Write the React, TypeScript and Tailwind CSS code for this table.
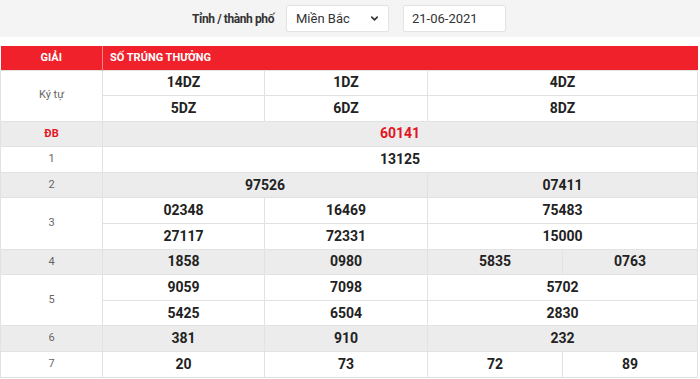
// Kết quả xổ số — bảng kết quả Miền Bắc
import { ChevronDown } from "lucide-react";

type Cell = { text: string; span: number };
interface Row {
  label: string;
  lines: Cell[][];
  gray?: boolean;
  special?: boolean;
}

const rows: Row[] = [
  {
    label: "Ký tự",
    lines: [
      [{ text: "14DZ", span: 1 }, { text: "1DZ", span: 1 }, { text: "4DZ", span: 2 }],
      [{ text: "5DZ", span: 1 }, { text: "6DZ", span: 1 }, { text: "8DZ", span: 2 }],
    ],
  },
  { label: "ĐB", gray: true, special: true, lines: [[{ text: "60141", span: 4 }]] },
  { label: "1", lines: [[{ text: "13125", span: 4 }]] },
  { label: "2", gray: true, lines: [[{ text: "97526", span: 2 }, { text: "07411", span: 2 }]] },
  {
    label: "3",
    lines: [
      [{ text: "02348", span: 1 }, { text: "16469", span: 1 }, { text: "75483", span: 2 }],
      [{ text: "27117", span: 1 }, { text: "72331", span: 1 }, { text: "15000", span: 2 }],
    ],
  },
  {
    label: "4",
    gray: true,
    lines: [[{ text: "1858", span: 1 }, { text: "0980", span: 1 }, { text: "5835", span: 1 }, { text: "0763", span: 1 }]],
  },
  {
    label: "5",
    lines: [
      [{ text: "9059", span: 1 }, { text: "7098", span: 1 }, { text: "5702", span: 2 }],
      [{ text: "5425", span: 1 }, { text: "6504", span: 1 }, { text: "2830", span: 2 }],
    ],
  },
  { label: "6", gray: true, lines: [[{ text: "381", span: 1 }, { text: "910", span: 1 }, { text: "232", span: 2 }]] },
  {
    label: "7",
    lines: [[{ text: "20", span: 1 }, { text: "73", span: 1 }, { text: "72", span: 1 }, { text: "89", span: 1 }]],
  },
];

export default function App() {
  return (
    <div className="w-[700px] h-[379px] bg-white overflow-hidden" style={{ fontFamily: "Roboto, 'Liberation Sans', sans-serif" }}>
      {/* Bộ lọc */}
      <div className="h-[37px] bg-[#f4f4f4] flex items-center">
        <span className="ml-[192px] w-[94px] shrink-0 whitespace-nowrap text-[12px] tracking-[-0.4px] font-bold text-[#333]">Tỉnh / thành phố</span>
        <div className="w-[103px] h-[27px] bg-white border border-[#e3e3e3] rounded-[2px] flex items-center justify-between pl-[9px] pr-[8px] text-[13px] text-[#333]">
          <span>Miền Bắc</span>
          <ChevronDown className="w-[11px] h-[11px] text-[#333]" strokeWidth={3.5} />
        </div>
        <div className="ml-[14px] w-[103px] h-[27px] bg-white border border-[#e3e3e3] rounded-[2px] flex items-center pl-[8px] text-[13px] text-[#333]">
          21-06-2021
        </div>
      </div>

      {/* Bảng kết quả */}
      <table className="mt-[9px] w-[697px] border-collapse table-fixed">
        <colgroup>
          <col className="w-[102px]" />
          <col className="w-[162px]" />
          <col className="w-[163px]" />
          <col className="w-[135px]" />
          <col className="w-[135px]" />
        </colgroup>
        <thead>
          <tr className="h-[24px] bg-[#f0212a] text-white text-[11px] font-bold">
            <th className="border-r border-[#f58a8e] text-center">GIẢI</th>
            <th colSpan={4} className="text-left pl-[7px]">SỐ TRÚNG THƯỞNG</th>
          </tr>
        </thead>
        <tbody>
          {rows.map((row) =>
            row.lines.map((line, i) => (
              <tr key={row.label + i} className={`h-[25.6px] ${row.gray ? "bg-[#ececec]" : "bg-white"}`}>
                {i === 0 && (
                  <td
                    rowSpan={row.lines.length}
                    className={`border border-[#e2e2e2] text-center text-[11px] ${
                      row.special ? "text-[#e4151f] font-bold" : "text-[#666]"
                    }`}
                  >
                    {row.label}
                  </td>
                )}
                {line.map((c, j) => (
                  <td
                    key={j}
                    colSpan={c.span}
                    className={`border border-[#e2e2e2] text-center text-[14px] font-bold p-0 ${
                      row.special ? "text-[#e4151f]" : "text-[#222]"
                    }`}
                  >
                    {c.text}
                  </td>
                ))}
              </tr>
            ))
          )}
        </tbody>
      </table>
    </div>
  );
}
